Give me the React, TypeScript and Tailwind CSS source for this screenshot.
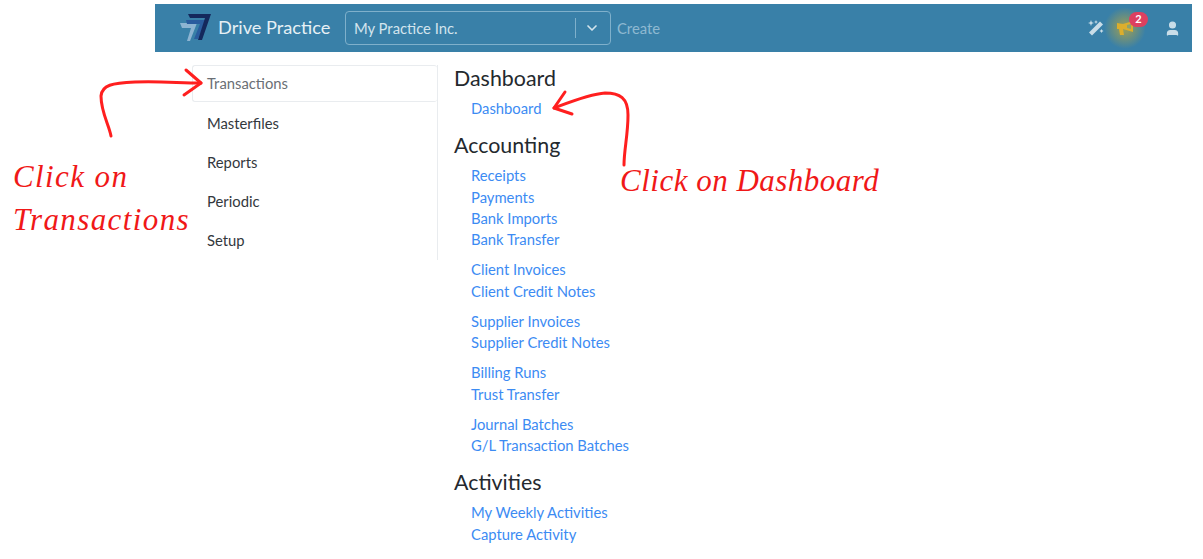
import React from "react";
import { ChevronDown, User } from "lucide-react";

const font = { fontFamily: "Lato, 'Noto Sans', sans-serif" };

const groups = [
  {
    title: "Dashboard",
    sets: [["Dashboard"]],
  },
  {
    title: "Accounting",
    sets: [
      ["Receipts", "Payments", "Bank Imports", "Bank Transfer"],
      ["Client Invoices", "Client Credit Notes"],
      ["Supplier Invoices", "Supplier Credit Notes"],
      ["Billing Runs", "Trust Transfer"],
      ["Journal Batches", "G/L Transaction Batches"],
    ],
  },
  {
    title: "Activities",
    sets: [["My Weekly Activities", "Capture Activity"]],
  },
];

const side = ["Masterfiles", "Reports", "Periodic", "Setup"];

function Logo() {
  return (
    <svg width="38" height="30" viewBox="0 0 38 30" className="shrink-0">
      <polygon points="1,10 18,10 11,28 8,28 12,15 3,15" fill="#8db4d2" />
      <polygon points="7,7 27,7 19,26 15,26 21,11 8,11" fill="#2a5c9e" />
      <polygon points="9,1 32,1 23,27 19,27 26,5 11,5" fill="#14285c" />
    </svg>
  );
}

function Wand() {
  return (
    <svg width="16" height="16" viewBox="0 0 16 16" fill="#c9dde8">
      <polygon points="12,1.5 15,4.5 4,15.5 1,12.5" />
      <polygon points="3,0 3.8,2.2 6,3 3.8,3.8 3,6 2.2,3.8 0,3 2.2,2.2" />
      <polygon points="8,0 8.6,1.4 10,2 8.6,2.6 8,4 7.4,2.6 6,2 7.4,1.4" />
      <polygon points="13.5,9 14.2,10.3 15.5,11 14.2,11.7 13.5,13 12.8,11.7 11.5,11 12.8,10.3" />
    </svg>
  );
}

function Megaphone() {
  return (
    <svg width="17" height="14" viewBox="0 0 17 14" fill="#dcae2c">
      <polygon points="0,2 6,3 16,0 16,11 6,8 0,8" />
      <polygon points="2,8 6,8 7,14 3,14" />
      <polygon points="10,4 14,3 14,8 10,7" fill="#8fa36b" />
    </svg>
  );
}

function ArrowLeftNote() {
  return (
    <svg className="absolute left-[90px] top-[60px]" width="125" height="85" viewBox="90 60 125 85" fill="none">
      <path d="M111 136 C109 125 101 112 101 96 C102 85 112 83 135 82 C160 81 180 83 201 83" stroke="#ff1f1f" strokeWidth="3" strokeLinecap="round" />
      <path d="M186 70 L201 83 L184 95" stroke="#ff1f1f" strokeWidth="3" strokeLinecap="round" strokeLinejoin="round" />
    </svg>
  );
}

function ArrowRightNote() {
  return (
    <svg className="absolute left-[545px] top-[85px]" width="95" height="85" viewBox="545 85 95 85" fill="none">
      <path d="M624 165 C624 150 628 135 628 115 C628 98 620 93 605 93 C590 94 570 102 554 108" stroke="#ff1f1f" strokeWidth="3" strokeLinecap="round" />
      <path d="M565 92 L554 108 L572 114" stroke="#ff1f1f" strokeWidth="3" strokeLinecap="round" strokeLinejoin="round" />
    </svg>
  );
}

export default function App() {
  return (
    <div className="relative h-[559px] w-[1203px] overflow-hidden bg-white" style={font}>
      <div className="pl-[155px] pr-[11px] pt-[4px]">
        <header className="flex h-[48px] items-center bg-[#3980a8] pl-[24px] pr-[11px]">
          <Logo />
          <span className="ml-[1px] w-[127px] text-[18.2px] text-[#e6f0f5] whitespace-nowrap">Drive Practice</span>
          <div className="flex h-[34px] w-[266px] items-center rounded-[4px] border border-[#7fb0cb] pl-[8px] pr-[8px]">
            <span className="flex-1 text-[14.8px] text-[#d3e4ed]">My Practice Inc.</span>
            <span className="h-[20px] w-px bg-[#7fb0cb]" />
            <ChevronDown size={16} strokeWidth={2.5} className="ml-[8px] mr-[2px] text-[#d3e4ed]" />
          </div>
          <span className="ml-[6px] text-[14.8px] text-[#8fb9d1]">Create</span>
          <div className="ml-auto flex items-center">
            <Wand />
            <div className="relative ml-[1px] flex h-[44px] w-[40px] items-center justify-center rounded-full bg-[radial-gradient(circle,#a3a04f_0%,#3980a8_70%)]">
              <Megaphone />
              <span className="absolute left-[24px] top-[6px] flex h-[15px] w-[19px] items-center justify-center rounded-full bg-[#dd4060] text-[11px] font-bold text-white">2</span>
            </div>
            <User size={17} fill="#c9dde8" stroke="#c9dde8" className="ml-[19px]" />
          </div>
        </header>
      </div>

      <main className="ml-[192px] flex pt-[13px]">
        <nav className="h-[195px] w-[246px] border-r border-[#e9ecef]">
          <div className="mb-[2px] flex h-[37px] items-center rounded-[3px] border border-[#e9ecef] border-r-0 pl-[14px] text-[14.8px] text-[#6a6f75]">Transactions</div>
          {side.map((s) => (
            <div key={s} className="flex h-[39px] items-center pl-[15px] text-[14.8px] text-[#33383d]">{s}</div>
          ))}
        </nav>
        <section className="pl-[16px]">
          {groups.map((g) => (
            <div key={g.title} className="pb-[4px]">
              <h2 className="h-[26px] text-[21.4px] leading-[26px] text-[#24292e]">{g.title}</h2>
              <div className="pt-[7px] pl-[17px]">
                {g.sets.map((set, i) => (
                  <ul key={i} className="mb-[9px]">
                    {set.map((l) => (
                      <li key={l} className="h-[21.25px] text-[14.8px] leading-[21px] text-[#3c8bf3]">{l}</li>
                    ))}
                  </ul>
                ))}
              </div>
            </div>
          ))}
        </section>
      </main>

      <ArrowLeftNote />
      <ArrowRightNote />
      <div className="absolute left-[13px] top-[155px] font-['Liberation_Serif',serif] text-[31px] italic leading-[43px] tracking-[1.4px] text-[#f01818]">
        Click on
        <br />
        Transactions
      </div>
      <div className="absolute left-[620px] top-[159px] whitespace-nowrap font-['Liberation_Serif',serif] text-[31px] italic leading-[43px] tracking-[0.5px] text-[#f01818]">
        Click on Dashboard
      </div>
    </div>
  );
}
